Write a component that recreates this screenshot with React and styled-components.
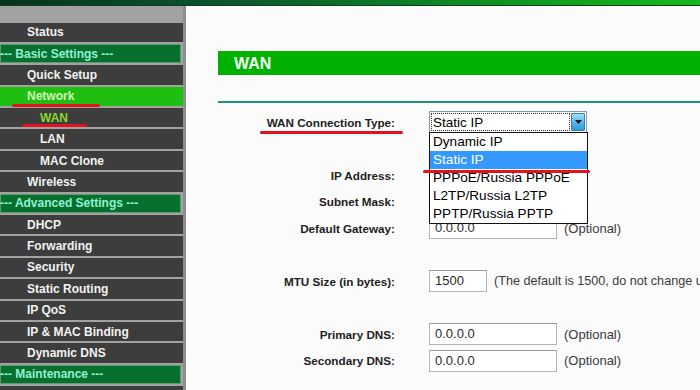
import React from "react";
import styled, { createGlobalStyle, css } from "styled-components";

const GlobalStyle = createGlobalStyle`
  html, body {
    margin: 0;
    padding: 0;
    background: #fbfbfb;
    overflow: hidden;
  }
  * { box-sizing: border-box; }
`;

const Page = styled.div`
  width: 700px;
  height: 390px;
  display: flex;
  flex-direction: column;
  font-family: "Liberation Sans", Arial, sans-serif;
`;

const TopBar = styled.div`
  height: 6px;
  flex: none;
  background: linear-gradient(90deg, #06331d 0%, #0a5a2c 35%, #10a01c 80%, #16b81c 100%);
  border-bottom: 1px solid #123d22;
`;

const Main = styled.div`
  flex: 1;
  display: flex;
  min-height: 0;
`;

const Sidebar = styled.nav`
  width: 186px;
  flex: none;
  background: #a2a2a2;
  border-right: 3px solid #8e8e8e;
  padding-top: 16.5px;
  display: flex;
  flex-direction: column;
  gap: 2px;
  overflow: hidden;
`;

const MenuItem = styled.div`
  position: relative;
  height: 19.4px;
  flex: none;
  display: flex;
  align-items: center;
  font-size: 12px;
  font-weight: bold;
  white-space: nowrap;
  background: #3d3d3d;
  color: #f2f2f2;
  padding-left: ${(p) => (p.$sub ? 40 : 27)}px;

  ${(p) =>
    p.$kind === "section" &&
    css`
      background: #08702e;
      color: #8ff2d2;
      padding-left: 0;
      margin-right: 2px;
      box-shadow: inset 0 0 0 1px #5f9a72;
    `}
  ${(p) =>
    p.$kind === "active" &&
    css`
      background: #1fbf12;
      color: #d2f6b4;
    `}
  ${(p) =>
    p.$kind === "current" &&
    css`
      color: #8bd62c;
    `}
`;

// red hand-drawn underline marks lying over the page
const Mark = styled.span`
  position: absolute;
  height: 3px;
  border-radius: 2px;
  background: #e3121c;
  left: ${(p) => p.$left}px;
  top: ${(p) => p.$top}px;
  width: ${(p) => p.$width}px;
  z-index: 5;
`;

const Content = styled.main`
  flex: 1;
  padding: 45px 0 0 32px;
  overflow: hidden;
`;

const TitleBar = styled.div`
  height: 24px;
  background: #00b100;
  color: #f4fff4;
  font-size: 16px;
  font-weight: bold;
  line-height: 25px;
  padding-left: 16px;
`;

const Divider = styled.div`
  height: 2px;
  margin-top: 26px;
  background: #1f937a;
`;

const Form = styled.div`
  margin-top: 6px;
  display: grid;
  grid-template-columns: 177px 1fr;
  grid-auto-rows: 26.5px;
  column-gap: 34px;
  align-items: center;
`;

const Label = styled.div`
  position: relative;
  text-align: right;
  font-size: 11.7px;
  font-weight: bold;
  color: #1e1e1e;
  white-space: nowrap;
`;

const Field = styled.div`
  position: relative;
  display: flex;
  align-items: center;
  gap: 7px;
  white-space: nowrap;
`;

const Input = styled.div`
  width: ${(p) => p.$width || 128}px;
  height: 22px;
  border: 1px solid #b4b4b4;
  border-top-color: #9a9a9a;
  background: #fff;
  font-size: 13px;
  color: #2a2a2a;
  line-height: 20px;
  padding-left: 5px;
`;

const Note = styled.span`
  font-size: ${(p) => p.$size || 13}px;
  color: #3a3a3a;
`;

const Select = styled.div`
  position: relative;
  width: 158px;
  height: 22px;
  border: 1px solid #7f9db9;
  background: #fff;
  display: flex;
  padding: 1px;
`;

const SelectValue = styled.div`
  flex: 1;
  border: 1px dotted #333;
  font-size: 13.5px;
  color: #000;
  line-height: 17px;
  padding-left: 1px;
`;

const ArrowButton = styled.div`
  width: 14px;
  margin-left: 1px;
  border: 1px solid #3a7cb0;
  border-radius: 1px;
  background: linear-gradient(180deg, #9fe0f8 0%, #52b8ec 55%, #2e9ad8 100%);
  display: flex;
  align-items: center;
  justify-content: center;
`;

const List = styled.div`
  position: absolute;
  top: 100%;
  left: -1px;
  width: 159px;
  border: 1px solid #111;
  background: #fff;
  z-index: 3;
`;

const Option = styled.div`
  height: 18px;
  line-height: 18px;
  font-size: 13.6px;
  padding-left: 3px;
  color: ${(p) => (p.$selected ? "#fff" : "#000")};
  background: ${(p) => (p.$selected ? "#3399ff" : "transparent")};
`;

const menu = [
  { text: "Status" },
  { text: "--- Basic Settings ---", kind: "section" },
  { text: "Quick Setup" },
  { text: "Network", kind: "active", mark: { left: 12, top: 17, width: 88 } },
  { text: "WAN", sub: true, kind: "current", mark: { left: 22, top: 16, width: 65 } },
  { text: "LAN", sub: true },
  { text: "MAC Clone", sub: true },
  { text: "Wireless" },
  { text: "--- Advanced Settings ---", kind: "section" },
  { text: "DHCP" },
  { text: "Forwarding" },
  { text: "Security" },
  { text: "Static Routing" },
  { text: "IP QoS" },
  { text: "IP & MAC Binding" },
  { text: "Dynamic DNS" },
  { text: "--- Maintenance ---", kind: "section" },
  { text: "" },
];

const options = ["Dynamic IP", "Static IP", "PPPoE/Russia PPPoE", "L2TP/Russia L2TP", "PPTP/Russia PPTP"];

const App = () => {
  return (
    <Page>
      <GlobalStyle />
      <TopBar />
      <Main>
        <Sidebar>
          {menu.map((m, i) => (
            <MenuItem key={i} $kind={m.kind} $sub={m.sub}>
              {m.text}
              {m.mark && <Mark $left={m.mark.left} $top={m.mark.top} $width={m.mark.width} />}
            </MenuItem>
          ))}
        </Sidebar>
        <Content>
          <TitleBar>WAN</TitleBar>
          <Divider />
          <Form>
            <Label>
              WAN Connection Type:
              <Mark $left={42} $top={15} $width={143} />
            </Label>
            <Field>
              <Select>
                <SelectValue>Static IP</SelectValue>
                <ArrowButton>
                  <svg width="7" height="4" viewBox="0 0 7 4">
                    <path d="M0 0h7L3.5 4z" fill="#111" />
                  </svg>
                </ArrowButton>
                <List>
                  {options.map((o) => (
                    <Option key={o} $selected={o === "Static IP"}>{o}</Option>
                  ))}
                </List>
                <Mark $left={-7} $top={58} $width={167} />
              </Select>
            </Field>

            <Label />
            <Field />

            {/* these two inputs sit under the open list */}
            <Label>IP Address:</Label>
            <Field><Input /></Field>

            <Label>Subnet Mask:</Label>
            <Field><Input /></Field>

            <Label>Default Gateway:</Label>
            <Field><Input>0.0.0.0</Input><Note>(Optional)</Note></Field>

            <Label />
            <Field />

            <Label>MTU Size (in bytes):</Label>
            <Field>
              <Input $width={58}>1500</Input>
              <Note $size={12.6}>(The default is 1500, do not change unless necessary.)</Note>
            </Field>

            <Label />
            <Field />

            <Label>Primary DNS:</Label>
            <Field><Input>0.0.0.0</Input><Note>(Optional)</Note></Field>

            <Label>Secondary DNS:</Label>
            <Field><Input>0.0.0.0</Input><Note>(Optional)</Note></Field>
          </Form>
        </Content>
      </Main>
    </Page>
  );
};

export default App;
